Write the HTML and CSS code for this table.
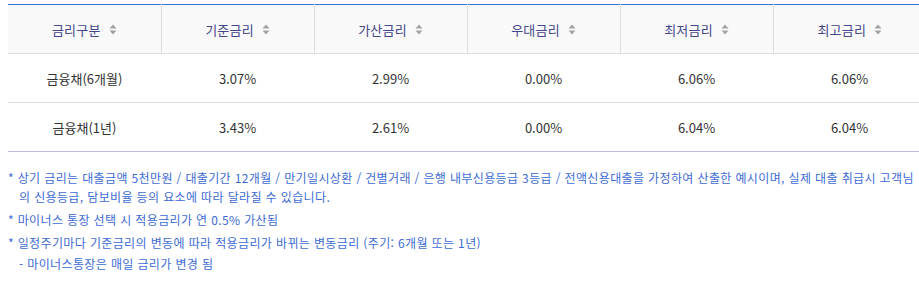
FILE: index.html
```html
<!DOCTYPE html>
<html lang="ko">
<head>
<meta charset="utf-8">
<title>금리</title>
<link rel="stylesheet" href="styles.css">
</head>
<body>
<div class="wrap">
  <table class="rates">
    <thead>
      <tr>
        <th><span class="th-in">금리구분<svg class="sort" viewBox="0 0 8 11" width="8" height="11"><path d="M4 0.5 L7.5 4.5 H0.5 Z"/><path d="M4 10.5 L7.5 6.5 H0.5 Z"/></svg></span></th>
        <th><span class="th-in">기준금리<svg class="sort" viewBox="0 0 8 11" width="8" height="11"><path d="M4 0.5 L7.5 4.5 H0.5 Z"/><path d="M4 10.5 L7.5 6.5 H0.5 Z"/></svg></span></th>
        <th><span class="th-in">가산금리<svg class="sort" viewBox="0 0 8 11" width="8" height="11"><path d="M4 0.5 L7.5 4.5 H0.5 Z"/><path d="M4 10.5 L7.5 6.5 H0.5 Z"/></svg></span></th>
        <th><span class="th-in">우대금리<svg class="sort" viewBox="0 0 8 11" width="8" height="11"><path d="M4 0.5 L7.5 4.5 H0.5 Z"/><path d="M4 10.5 L7.5 6.5 H0.5 Z"/></svg></span></th>
        <th><span class="th-in">최저금리<svg class="sort" viewBox="0 0 8 11" width="8" height="11"><path d="M4 0.5 L7.5 4.5 H0.5 Z"/><path d="M4 10.5 L7.5 6.5 H0.5 Z"/></svg></span></th>
        <th><span class="th-in">최고금리<svg class="sort" viewBox="0 0 8 11" width="8" height="11"><path d="M4 0.5 L7.5 4.5 H0.5 Z"/><path d="M4 10.5 L7.5 6.5 H0.5 Z"/></svg></span></th>
      </tr>
    </thead>
    <tbody>
      <tr>
        <td>금융채(6개월)</td>
        <td>3.07%</td>
        <td>2.99%</td>
        <td>0.00%</td>
        <td>6.06%</td>
        <td>6.06%</td>
      </tr>
      <tr>
        <td>금융채(1년)</td>
        <td>3.43%</td>
        <td>2.61%</td>
        <td>0.00%</td>
        <td>6.04%</td>
        <td>6.04%</td>
      </tr>
    </tbody>
  </table>
  <ul class="notes">
    <li>* 상기 금리는 대출금액 5천만원 / 대출기간 12개월 / 만기일시상환 / 건별거래 / 은행 내부신용등급 3등급 / 전액신용대출을 가정하여 산출한 예시이며, 실제 대출 취급시 고객님의 신용등급, 담보비율 등의 요소에 따라 달라질 수 있습니다.</li>
    <li>* 마이너스 통장 선택 시 적용금리가 연 0.5% 가산됨</li>
    <li>* 일정주기마다 기준금리의 변동에 따라 적용금리가 바뀌는 변동금리 (주기: 6개월 또는 1년)<span class="sub">- 마이너스통장은 매일 금리가 변경 됨</span></li>
  </ul>
</div>
</body>
</html>
```

FILE: styles.css
```css
html, body {
  margin: 0;
  padding: 0;
  background: #ffffff;
}

body {
  font-family: "Noto Sans CJK KR", "Noto Sans", sans-serif;
  color: #333333;
  overflow: hidden;
}

.wrap {
  padding: 4px 0 0 8px;
}

.rates {
  width: 918px;
  border-collapse: collapse;
  table-layout: fixed;
  border-top: 1px solid #3071d9;
  border-bottom: 1px solid #b9bcdc;
}

.rates th {
  height: 48px;
  padding: 0;
  background: #f9f9f9;
  font-weight: 400;
  font-size: 13px;
  letter-spacing: 0.2px;
  color: #44478a;
  border-bottom: 1px solid #dddddd;
  border-left: 1px solid #dddddd;
  text-align: center;
  vertical-align: middle;
}

.rates th:first-child {
  border-left: none;
}

.th-in {
  display: inline-flex;
  align-items: center;
  gap: 8px;
}

.sort {
  fill: #a3a3a3;
  display: block;
}

.rates td {
  height: 48px;
  padding: 0;
  font-size: 13px;
  color: #333333;
  text-align: center;
  vertical-align: middle;
}

.rates tbody tr + tr td {
  border-top: 1px solid #dddddd;
}

.notes {
  list-style: none;
  margin: 16px 0 0 0;
  padding: 0;
  font-size: 12px;
  line-height: 19px;
  letter-spacing: 0.37px;
  color: #3d6bd4;
}

.notes li {
  padding-left: 11px;
  text-indent: -11px;
  margin-bottom: 4px;
}

.notes .sub {
  display: block;
  text-indent: 0;
  margin-top: 2px;
}
```
